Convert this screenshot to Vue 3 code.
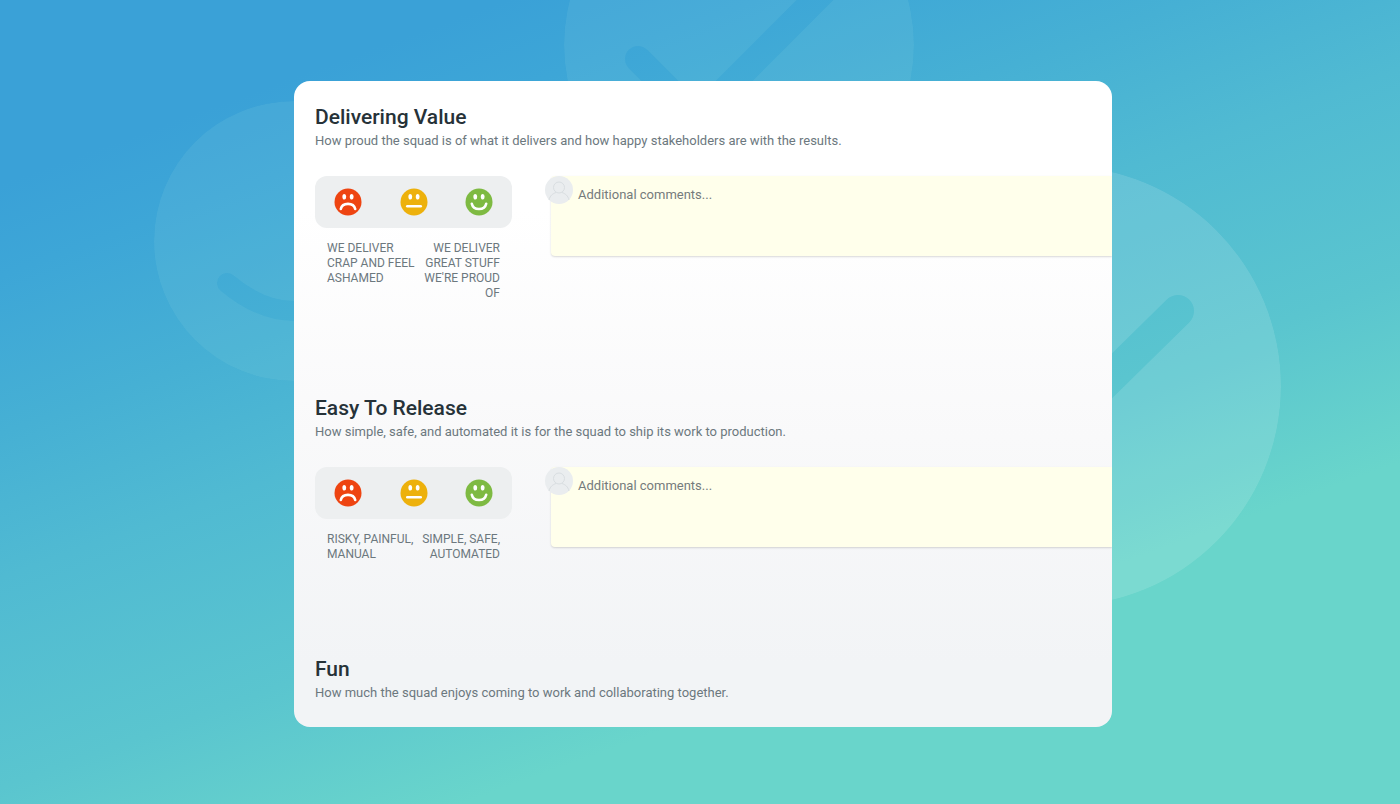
<template>
  <main class="page">
    <svg class="backdrop" viewBox="0 0 1400 804" preserveAspectRatio="xMidYMin slice" aria-hidden="true">
      <defs>
        <mask id="smile-cut">
          <circle cx="294" cy="241" r="140" fill="#fff" />
          <path d="M227 283Q294 339 361 283" fill="none" stroke="#000" stroke-width="20" stroke-linecap="round" />
        </mask>
        <mask id="small-check-cut">
          <circle cx="739" cy="45" r="175" fill="#fff" />
          <path d="M638 59L697 118L834 -19" fill="none" stroke="#000" stroke-width="26" stroke-linecap="round" stroke-linejoin="round" />
        </mask>
        <mask id="large-check-cut">
          <circle cx="1061" cy="386" r="220" fill="#fff" />
          <path d="M934 404L1008 478L1178 311" fill="none" stroke="#000" stroke-width="32" stroke-linecap="round" stroke-linejoin="round" />
        </mask>
      </defs>
      <circle class="bubble" cx="294" cy="241" r="140" mask="url(#smile-cut)" />
      <circle class="bubble" cx="739" cy="45" r="175" mask="url(#small-check-cut)" />
      <circle class="bubble bubble--large" cx="1061" cy="386" r="220" mask="url(#large-check-cut)" />
    </svg>

    <form class="card" @submit.prevent>
      <section v-for="question in questions" :key="question.id" class="question">
        <h2 class="question__title">{{question.title}}</h2>
        <p class="question__description">{{question.description}}</p>

        <div v-if="question.low" class="question__body">
          <div class="rating">
            <div class="rating__faces">
              <button
                v-for="face in faces"
                :key="face.name"
                type="button"
                class="face"
                :class="'face--' + face.name"
                :aria-label="face.label"
                @click="answers[question.id] = face.name"
              >
                <svg viewBox="0 0 28 28" class="face__icon">
                  <circle cx="14" cy="14" r="13.5" fill="currentColor" />
                  <ellipse cx="10.3" cy="8.8" rx="1.9" ry="2.8" fill="#fff" />
                  <ellipse cx="17.7" cy="8.8" rx="1.9" ry="2.8" fill="#fff" />
                  <path :d="face.mouth" fill="none" stroke="#fff" stroke-width="2.6" stroke-linecap="round" />
                </svg>
              </button>
            </div>
            <div class="rating__labels">
              <span class="rating__low">{{question.low}}</span>
              <span class="rating__high">{{question.high}}</span>
            </div>
          </div>

          <div class="comment">
            <svg class="comment__avatar" viewBox="0 0 28 28" aria-hidden="true">
              <circle cx="14" cy="14" r="14" fill="#eaedef" />
              <g fill="none" stroke="#d9dee1">
                <circle cx="14" cy="11.5" r="5.5" />
                <path d="M4 24C5 19.5 8 17.5 11 16.5M17 16.5C20 17.5 23 19.5 24 24" />
              </g>
            </svg>
            <textarea
              v-model="comments[question.id]"
              class="comment__input"
              placeholder="Additional comments..."
              aria-label="Additional comments"
            ></textarea>
          </div>
        </div>
      </section>
    </form>
  </main>
</template>

<script setup>
import {reactive} from "vue";

const faces = [
  {name: 'sad', label: 'Sad', mouth: 'M6.8 21C8.3 14.2 19.7 14.2 21.2 21'},
  {name: 'neutral', label: 'Neutral', mouth: 'M7.3 18.3H20.7'},
  {name: 'happy', label: 'Happy', mouth: 'M6.8 15.8C8.3 22.8 19.7 22.8 21.2 15.8'},
]

const questions = [
  {
    id: 'value',
    title: 'Delivering Value',
    description: 'How proud the squad is of what it delivers and how happy stakeholders are with the results.',
    low: 'We deliver crap and feel ashamed',
    high: "We deliver great stuff we're proud of",
  },
  {
    id: 'release',
    title: 'Easy To Release',
    description: 'How simple, safe, and automated it is for the squad to ship its work to production.',
    low: 'Risky, painful, manual',
    high: 'Simple, safe, automated',
  },
  {
    id: 'fun',
    title: 'Fun',
    description: 'How much the squad enjoys coming to work and collaborating together.',
  },
]

const answers = reactive({})
const comments = reactive({})
</script>

<style>
body {
  margin: 0;
}
</style>

<style scoped>
.page {
  position: relative;
  box-sizing: border-box;
  min-height: 100vh;
  padding: 81px 288px 76px 294px;
  overflow: hidden;
  background: linear-gradient(160deg, #3aa1d7 14%, #3da6d7 21%, #46b0d4 33%, #50bad2 44%, #5ac5cf 60%, #69d5cb 74%);
  font-family: Roboto, sans-serif;
}
.backdrop {
  position: absolute;
  inset: 0;
  width: 100%;
  height: 100%;
}
.bubble {
  fill: rgba(150, 220, 225, .13);
}
.bubble--large {
  fill: rgba(255, 255, 255, .12);
}
.card {
  position: relative;
  display: flex;
  flex-direction: column;
  gap: 94px;
  padding: 23px 0 24px 21px;
  border-radius: 16px;
  overflow: hidden;
  background: linear-gradient(#fff 20%, #f9f9fa 55%, #f2f4f6 90%);
}
.question__title {
  margin: 0;
  font-size: 21px;
  line-height: 26px;
  font-weight: 500;
  color: #263238;
}
.question__description {
  margin: 1px 0 0;
  font-size: 13px;
  line-height: 20px;
  color: #6c787e;
}
.question__body {
  display: flex;
  gap: 39px;
  margin-top: 25px;
}
.rating {
  flex: none;
  width: 197px;
}
.rating__faces {
  display: flex;
  justify-content: space-between;
  padding: 12px 19px;
  border-radius: 12px;
  background: #edeff0;
}
.face {
  padding: 0;
  border: 0;
  background: none;
  cursor: pointer;
}
.face__icon {
  display: block;
  width: 28px;
  height: 28px;
}
.face--sad {
  color: #ee4411;
}
.face--neutral {
  color: #edb10c;
}
.face--happy {
  color: #7eba42;
}
.rating__labels {
  display: flex;
  justify-content: space-between;
  padding: 13px 12px 0;
  font-size: 12px;
  line-height: 15px;
  color: #6c787e;
  text-transform: uppercase;
}
.rating__low {
  flex: none;
  width: 90px;
}
.rating__high {
  text-align: right;
}
.comment {
  position: relative;
  flex: 1;
}
.comment__avatar {
  position: absolute;
  left: -6px;
  top: 0;
  width: 28px;
  height: 28px;
}
.comment__input {
  display: block;
  box-sizing: border-box;
  width: 100%;
  height: 80px;
  padding: 9px 27px;
  border: 0;
  border-radius: 4px 0 0 4px;
  outline: 0;
  resize: none;
  background: #ffffeb;
  box-shadow: 0 1px 2px rgba(0, 0, 0, .15);
  font: 13px/20px Roboto, sans-serif;
  color: #263238;
}
.comment__input::placeholder {
  color: #757b7c;
  opacity: 1;
}
</style>
